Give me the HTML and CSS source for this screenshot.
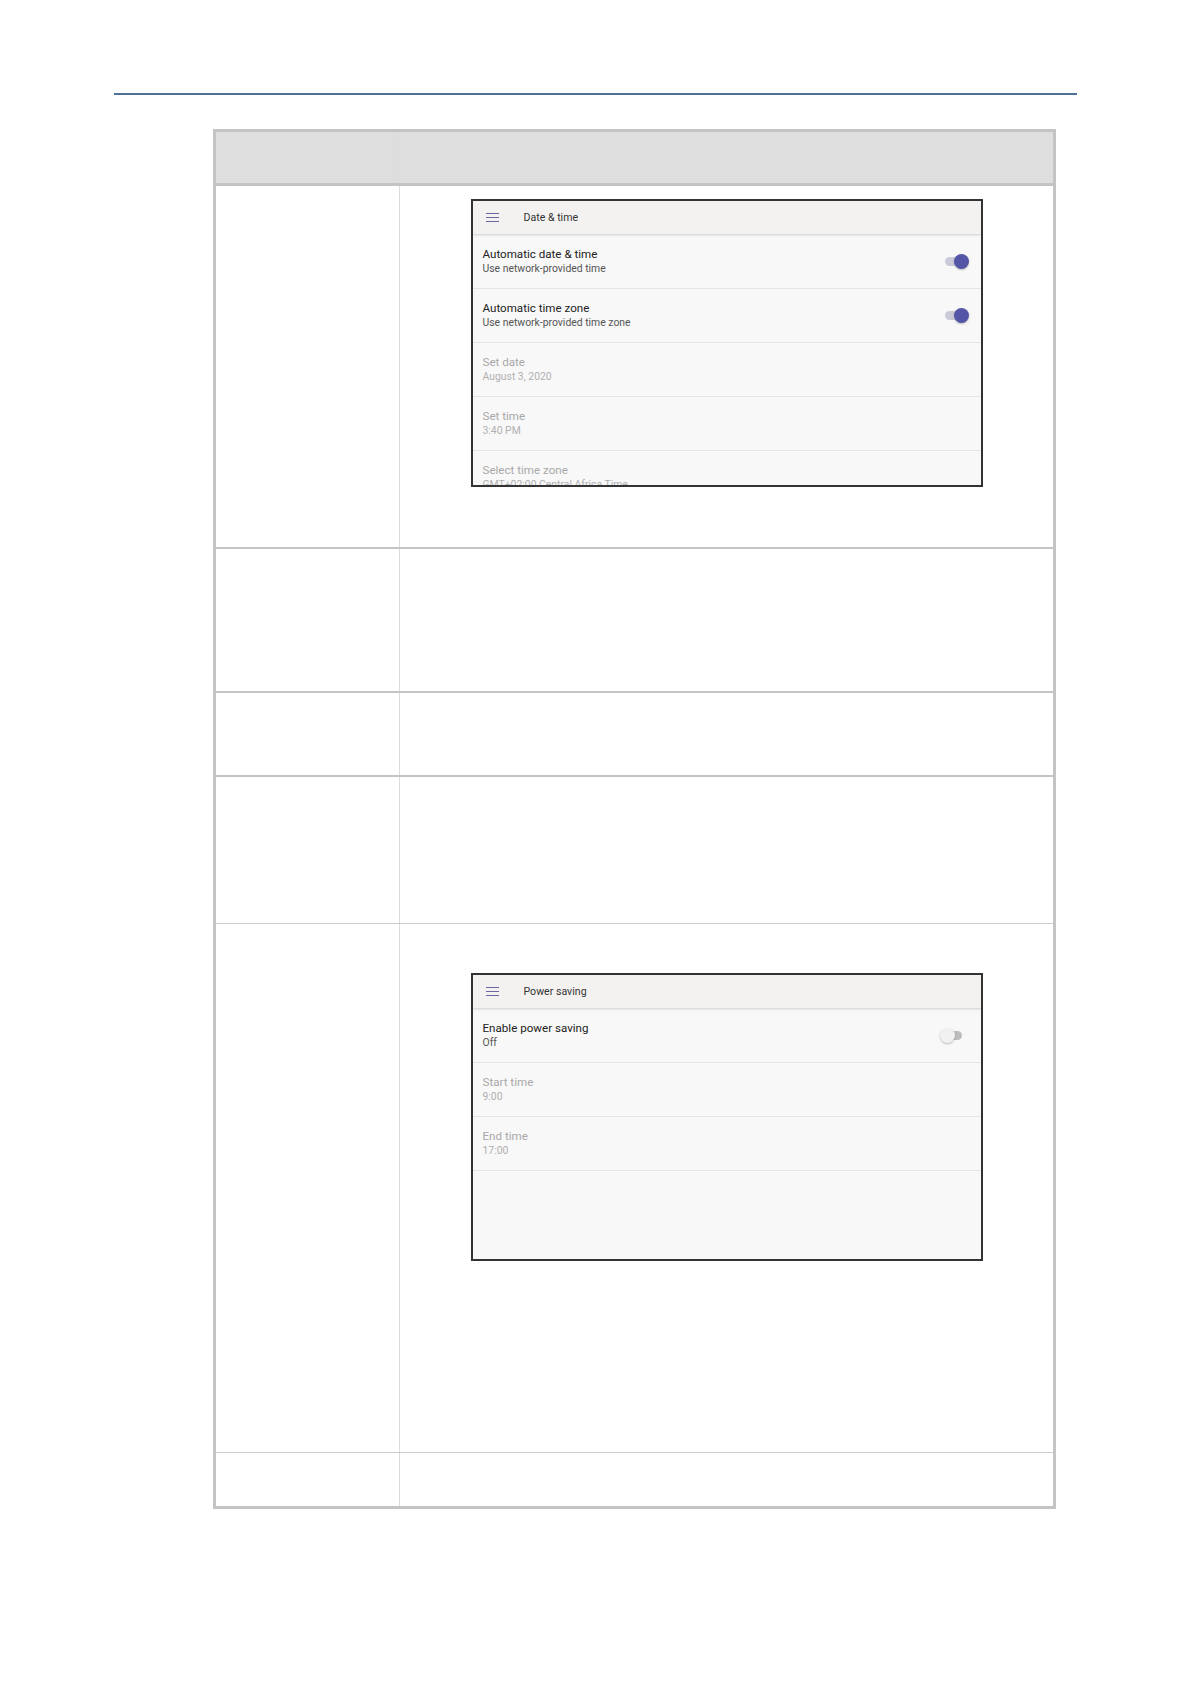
FILE: index.html
```html
<!DOCTYPE html>
<html lang="en">
<head>
    <meta charset="UTF-8">
    <meta name="viewport" content="width=device-width, initial-scale=1.0">
    <title>Settings</title>
    <link rel="stylesheet" href="styles.css">
</head>
<body>
    <div class="page-rule"></div>

    <section class="doc-table">
        <div class="row row-head">
            <div class="cell-key"></div>
            <div class="cell-val"></div>
        </div>

        <div class="row row-1">
            <div class="cell-key"></div>
            <div class="cell-val">
                <div class="device device-top">
                    <div class="device-bar">
                        <span class="menu-icon"><i></i><i></i><i></i></span>
                        <span class="bar-title">Date &amp; time</span>
                    </div>
                    <div class="setting">
                        <div class="setting-text">
                            <div class="setting-title">Automatic date &amp; time</div>
                            <div class="setting-sub">Use network-provided time</div>
                        </div>
                        <span class="switch on"></span>
                    </div>
                    <div class="setting">
                        <div class="setting-text">
                            <div class="setting-title">Automatic time zone</div>
                            <div class="setting-sub">Use network-provided time zone</div>
                        </div>
                        <span class="switch on"></span>
                    </div>
                    <div class="setting disabled">
                        <div class="setting-text">
                            <div class="setting-title">Set date</div>
                            <div class="setting-sub">August 3, 2020</div>
                        </div>
                    </div>
                    <div class="setting disabled">
                        <div class="setting-text">
                            <div class="setting-title">Set time</div>
                            <div class="setting-sub">3:40 PM</div>
                        </div>
                    </div>
                    <div class="setting disabled">
                        <div class="setting-text">
                            <div class="setting-title">Select time zone</div>
                            <div class="setting-sub">GMT+02:00 Central Africa Time</div>
                        </div>
                    </div>
                </div>
            </div>
        </div>

        <div class="row row-2">
            <div class="cell-key"></div>
            <div class="cell-val"></div>
        </div>

        <div class="row row-3">
            <div class="cell-key"></div>
            <div class="cell-val"></div>
        </div>

        <div class="row row-4">
            <div class="cell-key"></div>
            <div class="cell-val"></div>
        </div>

        <div class="row row-5">
            <div class="cell-key"></div>
            <div class="cell-val">
                <div class="device device-power">
                    <div class="device-bar">
                        <span class="menu-icon"><i></i><i></i><i></i></span>
                        <span class="bar-title">Power saving</span>
                    </div>
                    <div class="setting">
                        <div class="setting-text">
                            <div class="setting-title">Enable power saving</div>
                            <div class="setting-sub">Off</div>
                        </div>
                        <span class="switch"></span>
                    </div>
                    <div class="setting disabled">
                        <div class="setting-text">
                            <div class="setting-title">Start time</div>
                            <div class="setting-sub">9:00</div>
                        </div>
                    </div>
                    <div class="setting disabled">
                        <div class="setting-text">
                            <div class="setting-title">End time</div>
                            <div class="setting-sub">17:00</div>
                        </div>
                    </div>
                </div>
            </div>
        </div>

        <div class="row row-6">
            <div class="cell-key"></div>
            <div class="cell-val"></div>
        </div>
    </section>
</body>
</html>
```

FILE: styles.css
```css
body{
    margin: 0px;
    padding-top: 93px;
    background: #ffffff;
    font-family: Roboto, "Noto Sans", "Liberation Sans", sans-serif;
}

.page-rule{
    height: 2px;
    margin: 0px 114px;
    background: #4d7295;
}

/* ---- document table ---- */
.doc-table{
    margin: 34px 0px 0px 213px;
    width: 843px;
    border: 3px solid #c4c4c4;
    box-sizing: border-box;
}
.row{
    display: flex;
    border-bottom: 2px solid #c4c4c4;
}
.row:last-child{
    border-bottom: none;
}
.cell-key{
    width: 183px;
    flex-shrink: 0;
    border-right: 1px solid #dcdcdc;
}
.cell-val{
    flex: 1;
    display: flex;
    justify-content: center;
    align-items: flex-start;
}

.row-head{
    height: 51px;
    background: #dedede;
    border-bottom-width: 3px;
}
.row-1{ height: 361px; }
.row-2{ height: 142px; }
.row-3{ height: 82px; }
.row-4{ height: 146px; border-bottom: 1px solid #cccccc; }
.row-5{ height: 528px; border-bottom: 1px solid #cccccc; }
.row-6{ height: 53px; }

/* ---- device screenshots ---- */
.device{
    width: 512px;
    height: 288px;
    border: 2px solid #333333;
    box-sizing: border-box;
    background: #f8f8f8;
    overflow: hidden;
}
.device-top{
    margin-top: 13px;
}
.device-power{
    margin-top: 49px;
}

.device-bar{
    height: 33px;
    display: flex;
    align-items: center;
    background: #f3f2f1;
    border-bottom: 1px solid #dcdcdc;
    box-shadow: 0px 1px 2px rgba(0,0,0,0.08);
    position: relative;
}
.menu-icon{
    width: 13px;
    margin-left: 13px;
    display: flex;
    flex-direction: column;
    gap: 2.5px;
}
.menu-icon i{
    display: block;
    height: 1.5px;
    background: #6b66a4;
}
.bar-title{
    margin-left: 25px;
    font-size: 10.6px;
    color: #333333;
}

.setting{
    height: 53px;
    display: flex;
    align-items: center;
    border-bottom: 1px solid #e6e6e6;
    padding: 0px 12px 0px 10px;
}
.setting-text{
    flex: 1;
    margin-top: -1px;
}
.setting-title{
    font-size: 11.6px;
    line-height: 14px;
    color: #222222;
}
.setting-sub{
    margin-top: 1px;
    font-size: 10.4px;
    line-height: 13px;
    color: #555555;
}
.disabled .setting-title{
    color: #a8a8a8;
}
.disabled .setting-sub{
    color: #b0b0b0;
}

.switch{
    position: relative;
    width: 24px;
    height: 15px;
    margin-right: 5px;
}
.switch::before{
    content: "";
    position: absolute;
    top: 3px;
    left: 7px;
    width: 15px;
    height: 9px;
    border-radius: 5px;
    background: #bdbdbd;
}
.switch::after{
    content: "";
    position: absolute;
    top: 0px;
    left: 0px;
    width: 15px;
    height: 15px;
    border-radius: 50%;
    background: #f1f1f1;
    box-shadow: 0px 1px 2px rgba(0,0,0,0.25);
}
.switch.on{
    margin-right: 0px;
}
.switch.on::before{
    left: 0px;
    width: 16px;
    background: #cbcad9;
}
.switch.on::after{
    left: 9px;
    background: #5455a6;
}
```
